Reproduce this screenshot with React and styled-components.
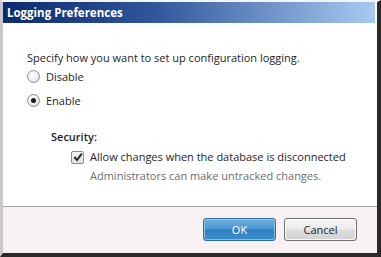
import React from "react";
import styled, { createGlobalStyle } from "styled-components";

const Global = createGlobalStyle`
  html, body { margin: 0; padding: 0; background: #ffffff; }
  * { box-sizing: border-box; }
`;

const Frame = styled.div`
  width: 381px;
  height: 257px;
  display: flex;
  flex-direction: column;
  background: #ffffff;
  border-top: 2px solid #f4f4f4;
  border-left: 3px solid #c8c8c8;
  border-right: 4px solid #2a2a2a;
  border-bottom: 4px solid #2a2a2a;
  font-family: "Open Sans", "Noto Sans", sans-serif;
`;

const TitleBar = styled.div`
  height: 21px;
  display: flex;
  align-items: center;
  padding-left: 4px;
  margin-right: 2px;
  background: linear-gradient(to right, #0c2a6e 0%, #2f559a 40%, #a8caf0 100%);
  color: #ffffff;
  font-weight: 700;
  font-size: 11.5px;
`;

const Body = styled.div`
  flex: 1;
  display: flex;
  flex-direction: column;
  padding: 27px 0 0 24px;
  color: #1e1e1e;
  font-size: 11px;
  border-right: 2px solid #ffffff;
`;

const Intro = styled.div`
  line-height: 16px;
  margin-bottom: 2px;
`;

const OptionRow = styled.label`
  display: flex;
  align-items: center;
  gap: 6px;
  height: 16px;
  margin-bottom: ${(p) => p.$gap || 0}px;
`;

const Radio = styled.span`
  width: 13px;
  height: 13px;
  border-radius: 50%;
  border: 1px solid #8e8f8f;
  background: radial-gradient(circle at 45% 40%, #ffffff 0%, #f2f2f2 45%, #d0d0d0 100%);
  display: flex;
  align-items: center;
  justify-content: center;
  &::after {
    content: "";
    width: 5px;
    height: 5px;
    border-radius: 50%;
    background: #1b1b1b;
    display: ${(p) => (p.$checked ? "block" : "none")};
  }
`;

const SectionTitle = styled.div`
  margin: 21px 0 4px 24px;
  font-weight: 600;
  line-height: 16px;
`;

const CheckBlock = styled.div`
  margin-left: 44px;
  display: grid;
  grid-template-columns: 13px auto;
  column-gap: 6px;
  row-gap: 3px;
  align-items: center;
  line-height: 16px;
`;

const Check = styled.span`
  width: 13px;
  height: 13px;
  border: 1px solid #8e8f8f;
  border-radius: 2px;
  background: linear-gradient(#f6f6f6, #dedede);
  display: flex;
  align-items: center;
  justify-content: center;
`;

const Hint = styled.div`
  grid-column: 2;
  color: #6d6d6d;
`;

const Footer = styled.div`
  height: 47px;
  border-top: 1px solid #a0a0a4;
  background: #f7f1f3;
  display: flex;
  align-items: center;
  justify-content: flex-end;
  gap: 8px;
  padding: 0 20px 2px 0;
`;

const Button = styled.button`
  width: 73px;
  height: 23px;
  font-family: inherit;
  font-size: 11px;
  border-radius: 3px;
  padding: 0;
  color: ${(p) => (p.$primary ? "#ffffff" : "#1e1e1e")};
  border: 1px solid ${(p) => (p.$primary ? "#2f6f9f" : "#707070")};
  background: ${(p) =>
    p.$primary
      ? "linear-gradient(#6fb0e0 0%, #4a95d2 48%, #2f7fc4 52%, #3d8dcc 100%)"
      : "linear-gradient(#f4f4f4 0%, #ececec 48%, #dcdcdc 52%, #d2d2d2 100%)"};
  box-shadow: inset 0 0 0 1px ${(p) => (p.$primary ? "rgba(180,220,250,0.6)" : "rgba(255,255,255,0.8)")};
`;

export default function App() {
  return (
    <>
      <Global />
      <Frame>
        <TitleBar>Logging Preferences</TitleBar>
        <Body>
          <Intro>Specify how you want to set up configuration logging.</Intro>
          <OptionRow $gap={8}>
            <Radio />
            Disable
          </OptionRow>
          <OptionRow>
            <Radio $checked />
            Enable
          </OptionRow>
          <SectionTitle>Security:</SectionTitle>
          <CheckBlock>
            <Check>
              <svg width="10" height="10" viewBox="0 0 10 10">
                <path d="M1.3 5 L4 8 L8.8 1.6" fill="none" stroke="#2a2a2a" strokeWidth="2" />
              </svg>
            </Check>
            <span>Allow changes when the database is disconnected</span>
            <Hint>Administrators can make untracked changes.</Hint>
          </CheckBlock>
        </Body>
        <Footer>
          <Button $primary>OK</Button>
          <Button>Cancel</Button>
        </Footer>
      </Frame>
    </>
  );
}
